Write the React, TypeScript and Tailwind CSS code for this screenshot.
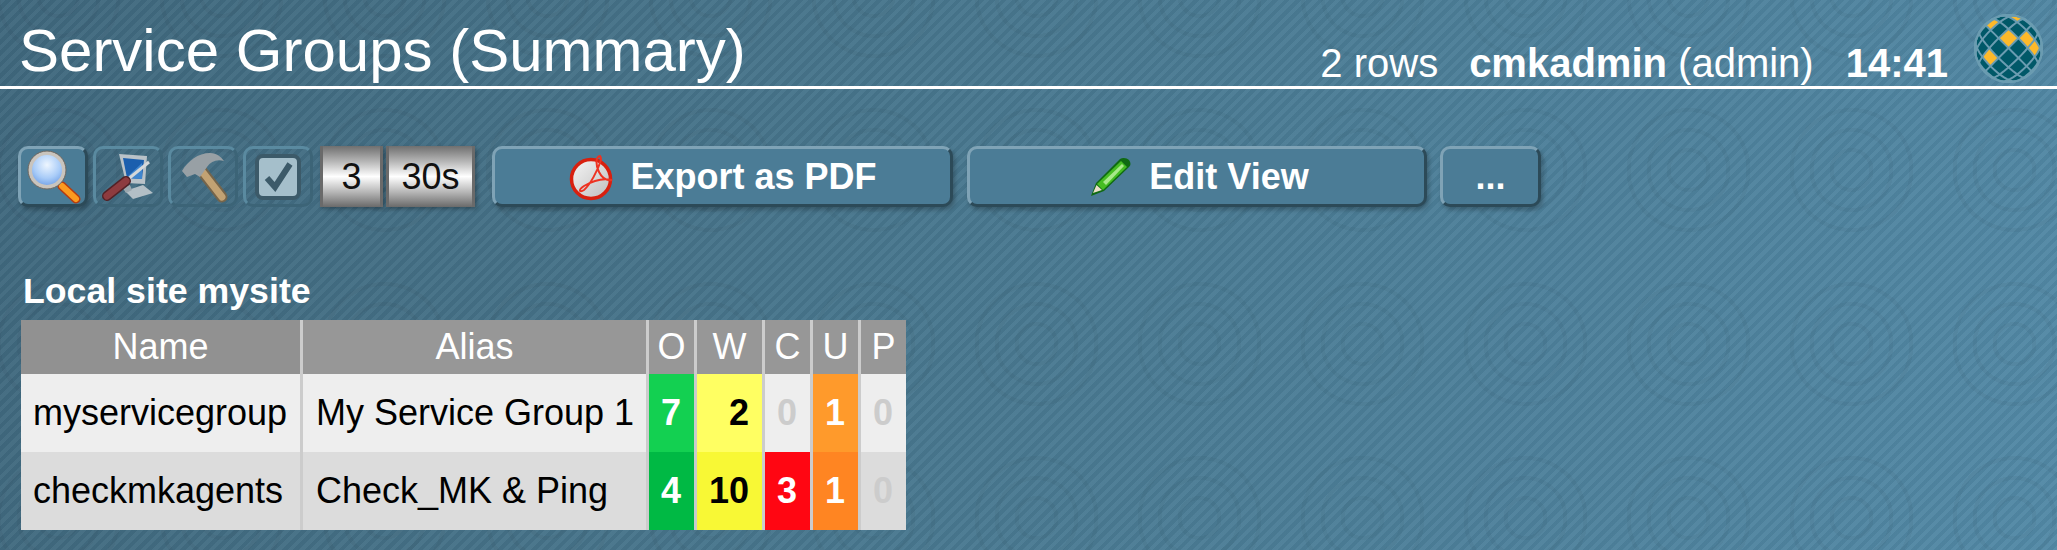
const font = "font-['Liberation_Sans',Arial,sans-serif]";

// icon buttons in the toolbar, first one is the active one
function IconButton({ active, children }: { active?: boolean; children: React.ReactNode }) {
  return (
    <div
      className={`flex h-[61px] w-[70px] items-center justify-center rounded-[10px] border-[3px] ${
        active
          ? "border-t-[#7fa3b6] border-l-[#7fa3b6] border-r-[#2c4a58] border-b-[#2c4a58] bg-[#4b7c96] shadow-[2px_3px_4px_rgba(0,0,0,0.25)]"
          : "border-t-[#5a8aa0] border-l-[#5a8aa0] border-r-[#3c6477] border-b-[#3c6477]"
      }`}
    >
      {children}
    </div>
  );
}

function TextButton({ className, children }: { className: string; children: React.ReactNode }) {
  return (
    <div
      className={`flex h-[61px] items-center justify-center gap-3 rounded-[10px] border-[3px] border-t-[#7fa3b6] border-l-[#7fa3b6] border-r-[#2c4a58] border-b-[#2c4a58] bg-[#4b7c96] text-[36px] font-bold text-white shadow-[2px_3px_4px_rgba(0,0,0,0.25)] ${className}`}
    >
      {children}
    </div>
  );
}

function Counter({ className, children }: { className: string; children: React.ReactNode }) {
  return (
    <div
      className={`flex h-[61px] items-center justify-center border-x-[3px] border-x-[#6a6a6a] bg-[linear-gradient(180deg,#6f6f6f_0%,#b5b5b5_25%,#ffffff_50%,#b8b8b8_75%,#6a6a6a_100%)] text-[36px] text-[#111] shadow-[2px_2px_4px_rgba(0,0,0,0.3)] ${className}`}
    >
      {children}
    </div>
  );
}

function Magnifier() {
  return (
    <svg width="58" height="56" viewBox="0 0 58 56">
      <defs>
        <radialGradient id="lens" cx="50%" cy="35%" r="65%">
          <stop offset="0%" stopColor="#eef6ff" />
          <stop offset="60%" stopColor="#a9ccf8" />
          <stop offset="100%" stopColor="#6f9fe6" />
        </radialGradient>
      </defs>
      <path d="M38 37 L52 50" stroke="#b53b10" strokeWidth="9" strokeLinecap="round" />
      <path d="M38 37 L52 50" stroke="#fb9a1f" strokeWidth="6" strokeLinecap="round" />
      <circle cx="23" cy="21" r="17" fill="url(#lens)" stroke="#c9c4bd" strokeWidth="4" />
      <circle cx="23" cy="21" r="19" fill="none" stroke="#6b6660" strokeWidth="1" />
    </svg>
  );
}

function Tools() {
  return (
    <svg width="58" height="56" viewBox="0 0 58 56">
      <path d="M20 5 L48 7 L46 35 L27 34 Z" fill="#b9c2c8" />
      <path d="M24 9 L45 11 L43 30 L28 29 Z" fill="#1b5fae" />
      <path d="M27 29 L43 14 L43 30 Z" fill="#3f86cf" />
      <path d="M26 42 L44 36 L54 44 L34 50 Z" fill="#b3bfc6" />
      <path d="M23 38 L31 36 L33 41 L27 44 Z" fill="#9aa7ae" />
      <path d="M28 31 L50 13" stroke="#d5d8da" strokeWidth="3" />
      <path d="M8 47 L27 32" stroke="#522227" strokeWidth="10" strokeLinecap="round" />
      <path d="M8 47 L27 32" stroke="#8d3b3f" strokeWidth="7" strokeLinecap="round" />
    </svg>
  );
}

function Hammer() {
  return (
    <svg width="58" height="56" viewBox="0 0 58 56">
      <path d="M27 21 L48 48" stroke="#75654b" strokeWidth="11" strokeLinecap="round" />
      <path d="M27 21 L48 48" stroke="#c2a273" strokeWidth="7" strokeLinecap="round" />
      <path d="M8 22 C14 12 24 4 36 4 C43 4 47 8 50 12 C43 10 37 12 33 18 L26 28 L21 25 L13 28 Z" fill="#98a0a5" />
    </svg>
  );
}

function CheckBox() {
  return (
    <svg width="48" height="48" viewBox="0 0 48 48">
      <rect x="3" y="3" width="42" height="42" rx="6" fill="#a5bfcb" stroke="#3c5a69" strokeWidth="4" />
      <path d="M13 25 L21 34 L36 11" fill="none" stroke="#3c5a69" strokeWidth="6" />
    </svg>
  );
}

function PdfIcon() {
  return (
    <svg width="50" height="50" viewBox="0 0 50 50">
      <defs>
        <linearGradient id="disc" x1="0" y1="0" x2="1" y2="1">
          <stop offset="0%" stopColor="#f6f6f6" />
          <stop offset="100%" stopColor="#bdbdbd" />
        </linearGradient>
      </defs>
      <circle cx="23" cy="27" r="19.5" fill="url(#disc)" stroke="#d8200f" strokeWidth="3.5" />
      <path
        d="M32 4 C27 5 28 14 31 20 C34 26 38 29 44 28 C36 26 26 28 16 34 C10 38 11 41 16 38 C22 33 30 18 33 8 C33 6 33 5 32 4 Z"
        fill="none"
        stroke="#ee3322"
        strokeWidth="2"
      />
    </svg>
  );
}

function Pencil() {
  return (
    <svg width="42" height="40" viewBox="0 0 42 40">
      <path d="M1 39 L6 26 L30 2 C33 0 37 1 39 3 C41 6 41 8 39 10 L14 34 Z" fill="#0f6a12" />
      <path d="M7 27 L31 4 L37 10 L13 33 Z" fill="#46bd22" />
      <path d="M13 25 L32 7 L34 9 L16 28 Z" fill="#a8e88a" />
      <path d="M3 36 L6.5 28 L12 33 Z" fill="#eadfc8" />
    </svg>
  );
}

// globe logo: a diamond lattice wrapped on a sphere
const R = 34;
const STEP = 20.75;
const toSphere = (s: number, d: number) => {
  const x = (s + d) / 2;
  const y = (s - d) / 2;
  const len = Math.hypot(x, y) || 1;
  const r = R * Math.sin(Math.min(len / R, Math.PI / 2));
  return `${((x / len) * r).toFixed(2)} ${((y / len) * r).toFixed(2)}`;
};
const sampled = (from: [number, number], to: [number, number]) => {
  const pts: string[] = [];
  for (let k = 0; k <= 24; k++) {
    const t = k / 24;
    pts.push(toSphere(from[0] + (to[0] - from[0]) * t, from[1] + (to[1] - from[1]) * t));
  }
  return pts;
};
const sumAt = (i: number) => -0.5 + STEP * i;
const diffAt = (j: number) => 0.5 + STEP * j;
const yellowCells: [number, number][] = [
  [-1, 0],
  [0, 1],
  [1, 1],
  [-1, -2],
  [-3, 0],
  [-2, 2],
  [2, -3],
];
const cellPath = ([i, j]: [number, number]) => {
  const s0 = sumAt(i);
  const s1 = sumAt(i + 1);
  const d0 = diffAt(j);
  const d1 = diffAt(j + 1);
  return (
    "M" +
    [
      ...sampled([s0, d0], [s1, d0]),
      ...sampled([s1, d0], [s1, d1]),
      ...sampled([s1, d1], [s0, d1]),
      ...sampled([s0, d1], [s0, d0]),
    ].join(" L") +
    " Z"
  );
};
const latticeIdx = [-4, -3, -2, -1, 0, 1, 2, 3, 4];

function Logo() {
  return (
    <svg width="69" height="69" viewBox="-35 -35 70 70">
      <circle cx="0" cy="0" r={R} fill="#005868" />
      {yellowCells.map((c) => (
        <path key={c.join()} d={cellPath(c)} fill="#fdb92a" />
      ))}
      <g stroke="#6b9cb1" strokeWidth="2" fill="none">
        {latticeIdx.map((n) => (
          <g key={n}>
            <path d={"M" + sampled([sumAt(n), -90], [sumAt(n), 90]).join(" L")} />
            <path d={"M" + sampled([-90, diffAt(n)], [90, diffAt(n)]).join(" L")} />
          </g>
        ))}
      </g>
    </svg>
  );
}

const rows = [
  {
    name: "myservicegroup",
    alias: "My Service Group 1",
    bg: "bg-[#eeeeee]",
    cells: [
      { v: 7, cls: "bg-[#13d051] text-white" },
      { v: 2, cls: "bg-[#ffff62] text-black" },
      { v: 0, cls: "text-[#cccccc]" },
      { v: 1, cls: "bg-[#ff9a2b] text-white" },
      { v: 0, cls: "text-[#cccccc]" },
    ],
  },
  {
    name: "checkmkagents",
    alias: "Check_MK & Ping",
    bg: "bg-[#dcdcdc]",
    cells: [
      { v: 4, cls: "bg-[#00b944] text-white" },
      { v: 10, cls: "bg-[#f8f835] text-black" },
      { v: 3, cls: "bg-[#ff0612] text-white" },
      { v: 1, cls: "bg-[#ff8522] text-white" },
      { v: 0, cls: "text-[#cccccc]" },
    ],
  },
];

const stateCols = ["O", "W", "C", "U", "P"];

export default function App() {
  return (
    <div
      className={`${font} h-[550px] w-full overflow-hidden bg-[image:repeating-linear-gradient(135deg,rgba(255,255,255,0.035)_0px,rgba(255,255,255,0.035)_4px,rgba(0,0,0,0.035)_4px,rgba(0,0,0,0.035)_8px),radial-gradient(circle,transparent_0px,transparent_18px,rgba(0,0,0,0.035)_18px,rgba(0,0,0,0.035)_22px,transparent_22px,transparent_38px,rgba(0,0,0,0.035)_38px,rgba(0,0,0,0.035)_42px,transparent_42px,transparent_58px,rgba(0,0,0,0.035)_58px,rgba(0,0,0,0.035)_62px,transparent_62px),linear-gradient(105deg,#3f687d_0%,#47758c_40%,#5289a6_100%)] bg-[size:auto,163px_174px,auto] bg-[position:0px_0px,140px_83px,0px_0px] text-white`}
    >
      <header className="flex h-[89px] items-end justify-between border-b-[3px] border-white pl-[19px] pr-[14px]">
        <h1 className="text-[60px] leading-[69px] pb-[1px]">Service Groups (Summary)</h1>
        <div className="flex items-end text-[40px] leading-[46px]">
          <span className="mr-[31px]">2 rows</span>
          <span className="mr-[32px]">
            <b>cmkadmin</b> (admin)
          </span>
          <b className="mr-[26px]">14:41</b>
          <div className="pb-[3px]">
            <Logo />
          </div>
        </div>
      </header>

      <div className="mt-[57px] flex pl-[18px]">
        <div className="flex gap-[5px]">
          <IconButton active>
            <Magnifier />
          </IconButton>
          <IconButton>
            <Tools />
          </IconButton>
          <IconButton>
            <Hammer />
          </IconButton>
          <IconButton>
            <CheckBox />
          </IconButton>
        </div>
        <div className="ml-[7px] flex gap-[3px]">
          <Counter className="w-[63px]">3</Counter>
          <Counter className="w-[89px]">30s</Counter>
        </div>
        <TextButton className="ml-[17px] w-[461px]">
          <PdfIcon />
          Export as PDF
        </TextButton>
        <TextButton className="ml-[14px] w-[460px] pl-[5px]">
          <span className="mr-[5px]">
            <Pencil />
          </span>
          Edit View
        </TextButton>
        <TextButton className="ml-[13px] w-[101px]">...</TextButton>
      </div>

      <div className="pl-[21px] pt-[61px]">
        <h2 className="mb-[5px] pl-[2px] text-[35.7px] font-bold leading-[47px]">Local site mysite</h2>
        <table className="w-[885px] table-fixed border-separate border-spacing-0 text-[36px] text-black">
          <colgroup>
            <col className="w-[282px]" />
            <col className="w-[346px]" />
            <col className="w-[48px]" />
            <col className="w-[68px]" />
            <col className="w-[48px]" />
            <col className="w-[48px]" />
            <col className="w-[45px]" />
          </colgroup>
          <thead>
            <tr className="h-[54px] bg-[#979797] font-normal text-white">
              <th className="border-r-[3px] border-[#cccccc] bg-[#919191] font-normal">Name</th>
              <th className="border-r-[3px] border-[#cccccc] font-normal">Alias</th>
              {stateCols.map((c, i) => (
                <th key={c} className={`font-normal ${i < 4 ? "border-r-[3px] border-[#cccccc]" : ""}`}>
                  {c}
                </th>
              ))}
            </tr>
          </thead>
          <tbody>
            {rows.map((row) => (
              <tr key={row.name} className={`h-[78px] ${row.bg}`}>
                <td className="border-r-[3px] border-[#cccccc] pl-[12px]">{row.name}</td>
                <td className="border-r-[3px] border-[#cccccc] pl-[13px]">{row.alias}</td>
                {row.cells.map((cell, i) => (
                  <td
                    key={i}
                    className={`pr-[13px] text-right font-bold ${cell.cls} ${
                      i < 4 ? "border-r-[3px] border-[#cccccc]" : ""
                    }`}
                  >
                    {cell.v}
                  </td>
                ))}
              </tr>
            ))}
          </tbody>
        </table>
      </div>
    </div>
  );
}
